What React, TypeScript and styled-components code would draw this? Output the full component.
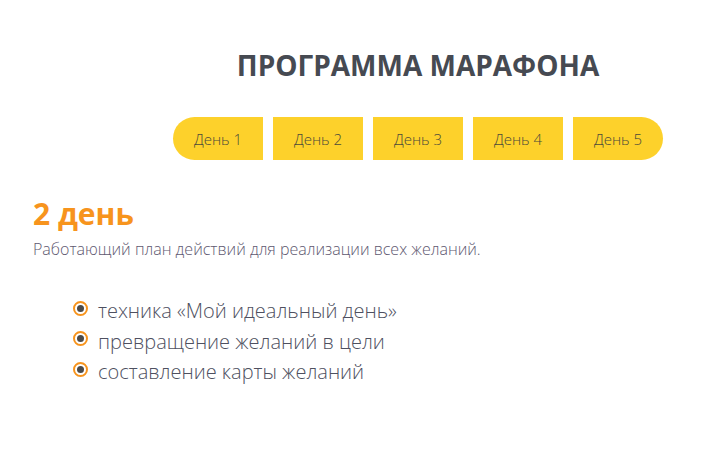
import React from 'react'
import styled, { createGlobalStyle } from 'styled-components'

const GlobalStyle = createGlobalStyle`
  html, body {
    margin: 0;
    padding: 0;
    background: #fff;
    font-family: 'Open Sans', 'Liberation Sans', sans-serif;
  }
`

const Page = styled.div`
  width: 704px;
  height: 452px;
  overflow: hidden;
`

const Header = styled.div`
  padding: 46px 0 0 132px;
  display: flex;
  flex-direction: column;
  align-items: center;
`

const Title = styled.h2`
  margin: 0;
  font-size: 28px;
  line-height: 38px;
  font-weight: 700;
  color: #464a52;
`

const Tabs = styled.div`
  margin-top: 33px;
  display: flex;
  gap: 10px;
`

const Tab = styled.button<{ $first?: boolean; $last?: boolean }>`
  width: 90px;
  height: 43px;
  border: 0;
  padding: 0;
  background: #fdd12b;
  font-family: 'Open Sans', 'Liberation Sans', sans-serif;
  font-weight: 300;
  font-size: 15px;
  color: #4a4a3a;
  cursor: pointer;
  border-radius: ${p => (p.$first ? '22px 0 0 22px' : p.$last ? '0 22px 22px 0' : '0')};
`

const Content = styled.div`
  padding: 35px 0 0 33px;
`

const DayTitle = styled.h3`
  margin: 0;
  font-size: 30px;
  line-height: 38px;
  font-weight: 700;
  color: #f7941d;
`

const Lead = styled.p`
  margin: 5px 0 0;
  font-size: 16px;
  line-height: 22px;
  font-weight: 300;
  color: #5e5870;
`

const List = styled.ul`
  list-style: none;
  margin: 36px 0 0;
  padding: 0 0 0 40px;
`

const Item = styled.li`
  display: flex;
  align-items: flex-start;
  gap: 10px;
  font-size: 20px;
  line-height: 30.5px;
  font-weight: 300;
  color: #4e5060;
`

const Bullet = styled.span`
  margin-top: 4.5px;
  width: 15px;
  height: 15px;
  box-sizing: border-box;
  border: 2px solid #f7941d;
  border-radius: 50%;
  display: flex;
  align-items: center;
  justify-content: center;
  flex-shrink: 0;

  &:after {
    content: '';
    width: 7px;
    height: 7px;
    border-radius: 50%;
    background: #4a4a4a;
  }
`

const days = ['День 1', 'День 2', 'День 3', 'День 4', 'День 5']
const items = ['техника «Мой идеальный день»', 'превращение желаний в цели', 'составление карты желаний']

const App: React.FC = () => {
  return (
    <Page>
      <GlobalStyle />
      <Header>
        <Title>ПРОГРАММА МАРАФОНА</Title>
        <Tabs>
          {days.map((d, i) => (
            <Tab key={d} $first={i === 0} $last={i === days.length - 1}>{d}</Tab>
          ))}
        </Tabs>
      </Header>
      <Content>
        <DayTitle>2 день</DayTitle>
        <Lead>Работающий план действий для реализации всех желаний.</Lead>
        <List>
          {items.map(item => (
            <Item key={item}>
              <Bullet />
              {item}
            </Item>
          ))}
        </List>
      </Content>
    </Page>
  )
}

export default App
